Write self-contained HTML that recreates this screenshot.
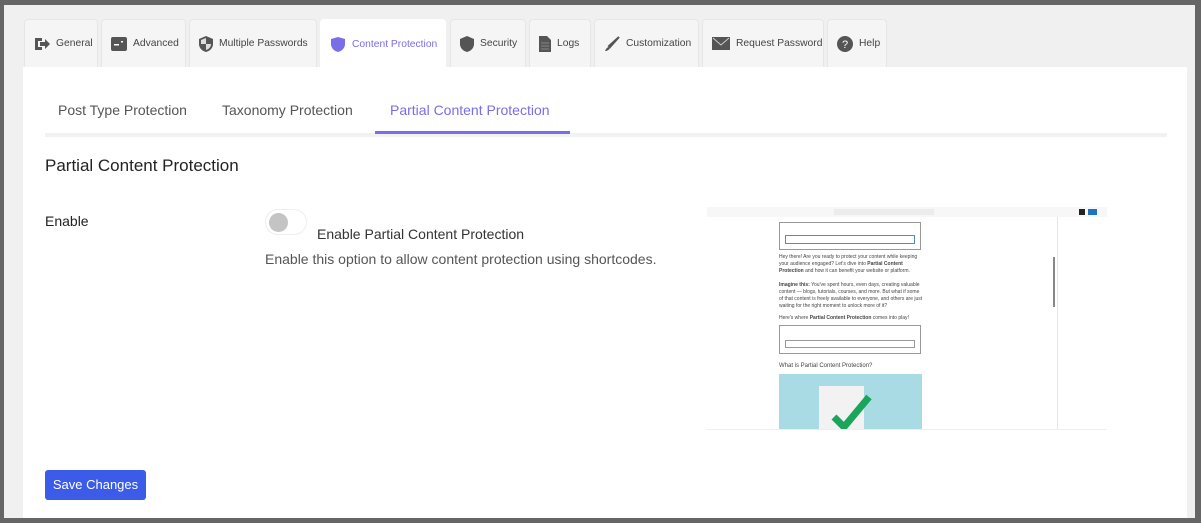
<!DOCTYPE html>
<html><head><meta charset="utf-8"><style>
*{box-sizing:border-box;margin:0;padding:0}
body{width:1201px;height:523px;background:#666;position:relative;overflow:hidden;font-family:"Liberation Sans",sans-serif}
.inner{position:absolute;left:4px;top:5px;width:1191px;height:513px;background:#f0f0f0}
.panel{position:absolute;left:23px;top:67px;width:1164px;height:451px;background:#fff}
.tab{position:absolute;top:19px;height:48px;background:#f5f5f5;border-radius:4px 4px 0 0;border:1px solid #e6e6e6;border-bottom:none;display:flex;align-items:center;padding-left:9px;font-size:10.3px;color:#444;white-space:nowrap;overflow:hidden}
.tab svg{margin-right:6px;flex:none}
.tab.act{background:#fff;color:#7a6ee6;border-color:#fff;height:49px}
.sub{position:absolute;top:102px;font-size:14px;color:#555}
.sub.act{color:#7a6ee6}
.line{position:absolute;left:45px;top:133px;width:1122px;height:4px;background:#f2f2f2}
.ul{position:absolute;left:375px;top:131px;width:195px;height:3px;background:#7a6ee6}
</style></head><body>
<div class="inner"></div>
<div class="panel"></div>
<div class="tab" style="left:24px;width:74px"><svg width="16" height="14" viewBox="0 0 16 14"><path d="M1 1h7v3H4v6h4v3H1z" fill="#555"/><path d="M6 5h5V2l5 5-5 5V9H6z" fill="#555"/></svg>General</div>
<div class="tab" style="left:101px;width:85px"><svg width="16" height="14"><rect x="0" y="0" width="16" height="14" rx="2" fill="#555"/><rect x="3" y="7" width="5" height="1.5" fill="#fff"/><rect x="10" y="4" width="2" height="1.5" fill="#fff"/></svg>Advanced</div>
<div class="tab" style="left:189px;width:128px"><svg width="14" height="16" viewBox="0 0 14 16"><path d="M7 0L14 3v5c0 4-3 7-7 8C3 15 0 12 0 8V3z" fill="#555"/><path d="M7 2v6h5c0 3-2 5-5 6V8H2V4z" fill="#fff" opacity=".8"/></svg>Multiple Passwords</div>
<div class="tab act" style="left:320px;width:126px"><svg width="16" height="16" viewBox="0 0 16 16"><path d="M8 1L15 3v5c0 4-3 7-7 8-4-1-7-4-7-8V3z" fill="#7a6ee6"/></svg>Content Protection</div>
<div class="tab" style="left:450px;width:76px"><svg width="14" height="16" viewBox="0 0 14 16"><path d="M7 0L14 3v5c0 4-3 7-7 8C3 15 0 12 0 8V3z" fill="#555"/></svg>Security</div>
<div class="tab" style="left:529px;width:62px"><svg width="12" height="16" viewBox="0 0 12 16"><path d="M0 0h8l4 4v12H0z" fill="#555"/><path d="M2 7h8M2 10h8M2 13h8" stroke="#888" stroke-width="1"/></svg>Logs</div>
<div class="tab" style="left:594px;width:105px"><svg width="16" height="16" viewBox="0 0 16 16"><path d="M15 1L6 11l-1-1z" fill="#555" stroke="#555" stroke-width="2"/><path d="M5 11c-2 0-3 2-4 4 2 0 4-1 5-3z" fill="#555"/></svg>Customization</div>
<div class="tab" style="left:702px;width:122px"><svg width="18" height="13" viewBox="0 0 18 13"><rect width="18" height="13" fill="#555"/><path d="M1 1l8 7 8-7" stroke="#ccc" fill="none"/></svg>Request Password</div>
<div class="tab" style="left:827px;width:60px"><svg width="16" height="16"><circle cx="8" cy="8" r="8" fill="#555"/><text x="8" y="12" font-size="11" fill="#fff" text-anchor="middle" font-family="Liberation Sans">?</text></svg>Help</div>

<div class="sub" style="left:58px">Post Type Protection</div>
<div class="sub" style="left:222px">Taxonomy Protection</div>
<div class="sub act" style="left:390px">Partial Content Protection</div>
<div class="line"></div><div class="ul"></div>

<div style="position:absolute;left:45px;top:156px;font-size:17px;color:#222">Partial Content Protection</div>
<div style="position:absolute;left:45px;top:213px;font-size:14px;color:#222">Enable</div>
<div style="position:absolute;left:265px;top:209px;width:42px;height:26px;border-radius:13px;background:#fff;border:1px solid #eee"><div style="position:absolute;left:3px;top:3px;width:19px;height:19px;border-radius:50%;background:#c4c4c4"></div></div>
<div style="position:absolute;left:317px;top:226px;font-size:14px;color:#333">Enable Partial Content Protection</div>
<div style="position:absolute;left:265px;top:251px;font-size:14px;color:#555">Enable this option to allow content protection using shortcodes.</div>

<div style="position:absolute;left:707px;top:207px;width:400px;height:223px;background:#fff;border-bottom:1px solid #eee;overflow:hidden;font-size:5px;color:#444">
 <div style="position:absolute;left:0;top:0;width:400px;height:10px;background:#f7f7f7"></div>
 <div style="position:absolute;left:127px;top:2px;width:100px;height:6px;background:#ececec"></div>
 <div style="position:absolute;left:381px;top:2px;width:9px;height:6px;background:#1e73be"></div>
 <div style="position:absolute;left:372px;top:2px;width:6px;height:6px;background:#222"></div>
 <div style="position:absolute;left:350px;top:10px;width:1px;height:213px;background:#e5e5e5"></div>
 <div style="position:absolute;left:346px;top:50px;width:2px;height:50px;background:#888"></div>
 <div style="position:absolute;left:72px;top:15px;width:142px;height:28px;border:1px solid #999"></div>
 <div style="position:absolute;left:78px;top:28px;width:130px;height:9px;border:1px solid #4a90c0"></div>
 <div style="position:absolute;left:72px;top:47px;width:145px;line-height:7px">Hey there! Are you ready to protect your content while keeping your audience engaged? Let's dive into <b>Partial Content Protection</b> and how it can benefit your website or platform.</div>
 <div style="position:absolute;left:72px;top:75px;width:145px;line-height:7px"><b>Imagine this:</b> You've spent hours, even days, creating valuable content — blogs, tutorials, courses, and more. But what if some of that content is freely available to everyone, and others are just waiting for the right moment to unlock more of it?</div>
 <div style="position:absolute;left:72px;top:108px">Here's where <b>Partial Content Protection</b> comes into play!</div>
 <div style="position:absolute;left:72px;top:118px;width:142px;height:29px;border:1px solid #999"></div>
 <div style="position:absolute;left:78px;top:133px;width:130px;height:8px;border:1px solid #999"></div>
 <div style="position:absolute;left:72px;top:156px;font-size:6px">What is Partial Content Protection?</div>
 <div style="position:absolute;left:72px;top:167px;width:143px;height:60px;background:#a8dbe4">
  <div style="position:absolute;left:40px;top:12px;width:45px;height:50px;background:#f2f2f2"></div>
  <svg style="position:absolute;left:50px;top:18px" width="50" height="40"><path d="M5 25l10 10 25-30" stroke="#1aa55a" stroke-width="7" fill="none"/></svg>
 </div>
</div>

<div style="position:absolute;left:45px;top:470px;width:101px;height:30px;background:#3b5be8;border-radius:3px;color:#fff;font-size:13px;line-height:30px;text-align:center">Save Changes</div>
</body></html>
